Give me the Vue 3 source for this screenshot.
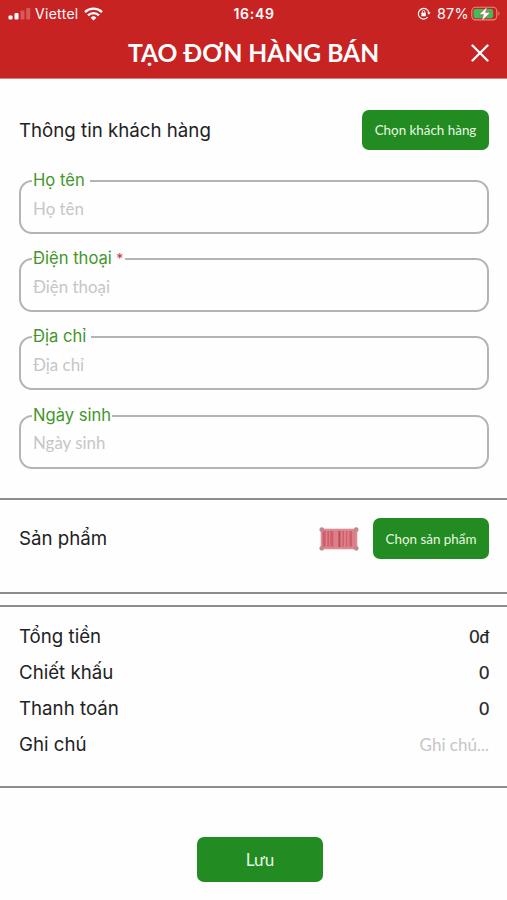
<script setup>
import { ref } from "vue";

const fields = ref([
  { id: "name", label: "Họ tên", value: "" },
  { id: "phone", label: "Điện thoại", value: "", required: true },
  { id: "address", label: "Địa chỉ", value: "" },
  { id: "birthday", label: "Ngày sinh", value: "" },
]);

const totals = [
  { id: "total", label: "Tổng tiền", value: "0đ" },
  { id: "discount", label: "Chiết khấu", value: "0" },
  { id: "payment", label: "Thanh toán", value: "0" },
];

const note = ref("");
</script>

<template>
  <div class="screen">
    <header class="header">
      <div class="status-bar">
        <div class="status-left">
          <svg class="signal" width="23" height="12" viewBox="0 0 23 12" fill="#fff">
            <rect x="0.5" y="7.5" width="4" height="4" rx="1" />
            <rect x="6.5" y="5" width="4" height="6.5" rx="1" />
            <rect x="12.5" y="2.5" width="4" height="9" rx="1" opacity="0.25" />
            <rect x="18.2" y="0" width="4" height="11.5" rx="1" opacity="0.25" />
          </svg>
          <span class="carrier">Viettel</span>
          <svg class="wifi" width="19" height="14" viewBox="0 0 19 14" fill="none" stroke="#fff" stroke-width="2.3">
            <path d="M1 5.1a12.3 12.3 0 0 1 17 0" />
            <path d="M4 8.4a7.8 7.8 0 0 1 11 0" />
            <path d="M6.6 10.7a4.2 4.2 0 0 1 5.8 0L9.5 13.6z" fill="#fff" stroke="none" />
          </svg>
        </div>
        <span class="clock">16:49</span>
        <div class="status-right">
          <svg class="lock" width="14" height="13" viewBox="0 0 14 13" fill="none" stroke="#fff" stroke-width="1.2">
            <path d="M10.7 10.2a5.3 5.3 0 1 1 1.2-4.4" />
            <path d="M10.2 5.4h3.4l-1.7 2.4z" fill="#fff" stroke="none" />
            <rect x="4.4" y="5.7" width="4.4" height="3.5" rx="0.5" fill="#fff" stroke="none" />
            <path d="M5.3 6V4.8a1.3 1.3 0 0 1 2.6 0V6" stroke-width="0.9" />
          </svg>
          <span class="percent">87%</span>
          <svg class="battery" width="30" height="16" viewBox="0 0 30 16">
            <rect x="0.8" y="1.3" width="25" height="12.6" rx="3.8" fill="none" stroke="#e58a80" stroke-width="1.1" />
            <path d="M27.4 5.4q2.2 2.2 0 4.4z" fill="#e58a80" />
            <rect x="2.5" y="3" width="19.6" height="9.2" rx="2.2" fill="#3fbd5b" />
            <path d="M16.2 0.8 8 8.6h4.5L10.8 15l8.6-8.6h-4.9z" fill="#fff" stroke="#c82323" stroke-width="0.4" />
          </svg>
        </div>
      </div>
      <div class="title-bar">
        <h1>TẠO ĐƠN HÀNG BÁN</h1>
        <button class="close" aria-label="Đóng">
          <svg width="18" height="18" viewBox="0 0 18 18" stroke="#fff" stroke-width="2.3" stroke-linecap="round">
            <path d="M1.5 1.5l15 15M16.5 1.5l-15 15" />
          </svg>
        </button>
      </div>
    </header>

    <section class="customer">
      <div class="section-head">
        <h2>Thông tin khách hàng</h2>
        <button class="btn btn-customer">Chọn khách hàng</button>
      </div>
      <div v-for="field in fields" :key="field.id" class="field">
        <label :for="field.id" :class="`label-${field.id}`">
          {{ field.label }}<span v-if="field.required" class="required"> *</span>
        </label>
        <input :id="field.id" v-model="field.value" :placeholder="field.label" />
      </div>
    </section>

    <section class="products">
      <div class="section-head">
        <h2>Sản phẩm</h2>
        <div class="product-actions">
          <svg class="barcode" width="40" height="24" viewBox="0 0 40 24">
            <rect x="2.5" y="2.5" width="35" height="19" fill="#de7f88" stroke="#d98f96" stroke-width="1.6" />
            <g fill="#cb5f6b">
              <rect x="3.6" y="4" width="3" height="15.5" />
              <rect x="8.4" y="4" width="1.6" height="15.5" />
              <rect x="11.3" y="4" width="3" height="15.5" />
              <rect x="19.4" y="4" width="2" height="16" fill="#b94c5a" />
              <rect x="23.5" y="4" width="1.4" height="15.5" />
              <rect x="27" y="4" width="1.2" height="15.5" />
              <rect x="30.4" y="4" width="2.6" height="15.5" />
            </g>
            <g fill="#c2888d">
              <circle cx="2.8" cy="2.7" r="2.4" />
              <circle cx="37.2" cy="2.7" r="2.4" />
              <circle cx="2.8" cy="21.3" r="2.4" />
              <circle cx="37.2" cy="21.3" r="2.4" />
            </g>
          </svg>
          <button class="btn btn-product">Chọn sản phẩm</button>
        </div>
      </div>
    </section>

    <section class="summary">
      <div v-for="row in totals" :key="row.id" class="summary-row">
        <span>{{ row.label }}</span>
        <span class="value">{{ row.value }}</span>
      </div>
      <div class="summary-row">
        <label for="note">Ghi chú</label>
        <input id="note" v-model="note" class="note" placeholder="Ghi chú..." />
      </div>
    </section>

    <footer class="footer">
      <button class="btn btn-save">Lưu</button>
    </footer>
  </div>
</template>

<style>
body {
  margin: 0;
  background: #fefefe;
}
</style>

<style scoped>
.screen {
  box-sizing: border-box;
  width: 507px;
  height: 900px;
  overflow: hidden;
  background: #fefefe;
  color: #222;
  font-family: Inter, "Liberation Sans", sans-serif;
}
.screen * {
  box-sizing: border-box;
}
h1,
h2 {
  margin: 0;
}
button {
  border: 0;
  padding: 0;
  cursor: pointer;
}
svg {
  display: block;
}
.header {
  height: 79px;
  background: #c82323;
  border-bottom: 1px solid #dc7c7c;
  color: #fff;
}
.status-bar {
  display: grid;
  grid-template-columns: 1fr auto 1fr;
  align-items: center;
  height: 27px;
  padding: 0 6px 0 8px;
  font-size: 14px;
}
.status-left,
.status-right {
  display: flex;
  align-items: center;
}
.status-right {
  justify-content: flex-end;
}
.carrier {
  margin: 0 5px 0 4px;
  letter-spacing: 0.3px;
}
.clock {
  margin-right: 1px;
  font-weight: 600;
  letter-spacing: 0.7px;
}
.percent {
  margin: 0 2px 0 6px;
  font-size: 14.4px;
  letter-spacing: 0.3px;
}
.title-bar {
  display: grid;
  grid-template-columns: 1fr auto 1fr;
  align-items: center;
  height: 51px;
}
.title-bar h1 {
  grid-column: 2;
  font: 700 24.6px/52px Lato, sans-serif;
  white-space: nowrap;
}
.close {
  justify-self: end;
  margin-right: 18px;
  background: none;
}
.customer {
  height: 419px;
  padding: 31px 18px 0 19px;
}
.section-head {
  display: flex;
  align-items: center;
  justify-content: space-between;
}
.section-head h2 {
  font-size: 18.7px;
  font-weight: 400;
}
.btn {
  background: #228b22;
  border-radius: 7px;
  color: #e9f8e3;
  font-family: Lato, sans-serif;
  white-space: nowrap;
}
.btn-customer {
  width: 127px;
  height: 40px;
  font-size: 13.4px;
}
.customer .section-head {
  height: 40px;
  margin-bottom: 30px;
}
.field {
  position: relative;
  height: 54px;
  margin-bottom: 24.2px;
}
.field label {
  position: absolute;
  top: -10px;
  left: 13px;
  padding: 0 5px 0 1px;
  background: #fefefe;
  color: #43962b;
  font-size: 16.6px;
  line-height: 20px;
  white-space: nowrap;
}
.field .label-phone,
.field .label-birthday {
  padding-right: 1px;
}
.required {
  color: #c23b3b;
  font-size: 14px;
  letter-spacing: 0.5px;
}
.field input {
  display: block;
  width: 100%;
  height: 100%;
  padding: 2px 12px 0;
  border: 2px solid #b4b4b4;
  border-radius: 13px;
  background: transparent;
  color: #222;
  font: 16.9px Lato, sans-serif;
  outline: none;
}
input::placeholder {
  color: #c6c6c6;
  opacity: 1;
}
.products {
  height: 96px;
  padding: 18px 18px 0 19px;
  border: solid #8c8c8c;
  border-width: 2px 0;
}
.product-actions {
  display: flex;
  align-items: center;
  gap: 14px;
}
.btn-product {
  width: 116px;
  height: 41px;
  font-size: 13.4px;
}
.summary {
  height: 183px;
  margin-top: 11px;
  padding: 11px 18px 0 19px;
  border: solid #8c8c8c;
  border-width: 2px 0;
}
.summary-row {
  display: flex;
  align-items: center;
  justify-content: space-between;
  height: 36px;
  font-size: 18.7px;
}
.value {
  font: 17px Lato, sans-serif;
  -webkit-text-stroke: 0.25px #222;
}
.note {
  width: 150px;
  padding: 0;
  border: 0;
  background: none;
  font: 17px Lato, sans-serif;
  text-align: right;
  outline: none;
}
.footer {
  display: flex;
  justify-content: center;
  padding: 49px 0 0 13px;
}
.btn-save {
  width: 126px;
  height: 45px;
  font-size: 17px;
}
</style>
